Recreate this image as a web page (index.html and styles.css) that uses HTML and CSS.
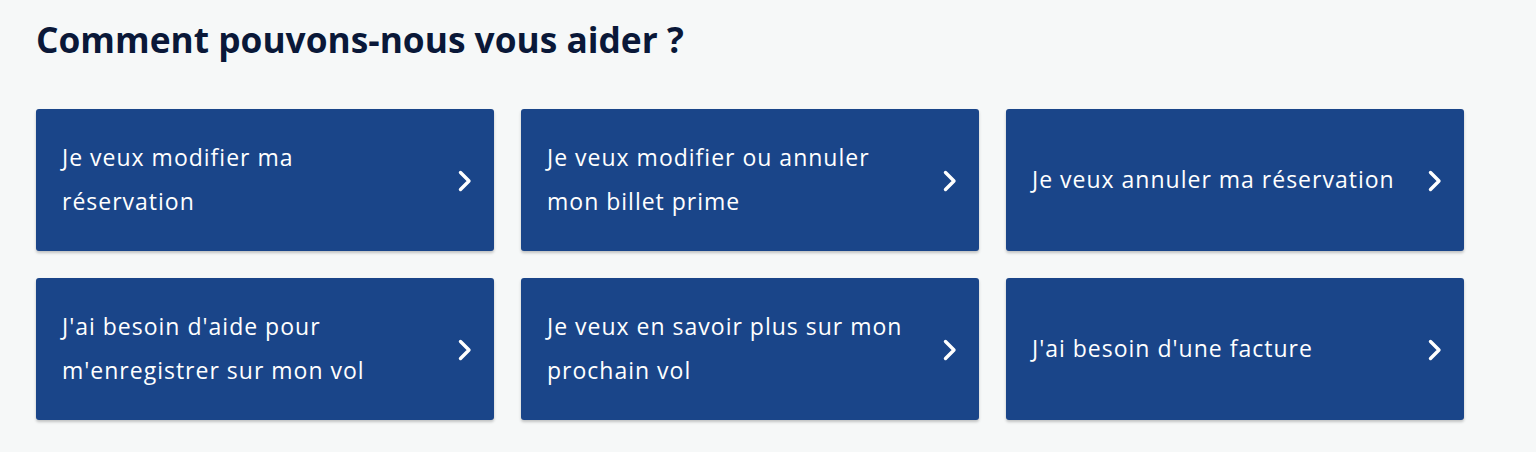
FILE: index.html
```html
<!DOCTYPE html>
<html lang="fr">
<head>
    <meta charset="UTF-8">
    <meta name="viewport" content="width=device-width, initial-scale=1.0">
    <title>Aide</title>
    <link rel="stylesheet" href="styles.css">
</head>
<body>
    <section class="help">
        <h1 class="help-title">Comment pouvons-nous vous aider ?</h1>
        <div class="help-grid">
            <a class="help-card" href="#">
                <span class="help-label">Je veux modifier ma<br>réservation</span>
                <svg class="chevron" viewBox="0 0 15 22"><path d="M3.5 2.5l8.5 8.5-8.5 8.5"/></svg>
            </a>
            <a class="help-card" href="#">
                <span class="help-label">Je veux modifier ou annuler<br>mon billet prime</span>
                <svg class="chevron" viewBox="0 0 15 22"><path d="M3.5 2.5l8.5 8.5-8.5 8.5"/></svg>
            </a>
            <a class="help-card" href="#">
                <span class="help-label">Je veux annuler ma réservation</span>
                <svg class="chevron" viewBox="0 0 15 22"><path d="M3.5 2.5l8.5 8.5-8.5 8.5"/></svg>
            </a>
            <a class="help-card" href="#">
                <span class="help-label">J'ai besoin d'aide pour<br>m'enregistrer sur mon vol</span>
                <svg class="chevron" viewBox="0 0 15 22"><path d="M3.5 2.5l8.5 8.5-8.5 8.5"/></svg>
            </a>
            <a class="help-card" href="#">
                <span class="help-label">Je veux en savoir plus sur mon<br>prochain vol</span>
                <svg class="chevron" viewBox="0 0 15 22"><path d="M3.5 2.5l8.5 8.5-8.5 8.5"/></svg>
            </a>
            <a class="help-card" href="#">
                <span class="help-label">J'ai besoin d'une facture</span>
                <svg class="chevron" viewBox="0 0 15 22"><path d="M3.5 2.5l8.5 8.5-8.5 8.5"/></svg>
            </a>
        </div>
    </section>
</body>
</html>
```

FILE: styles.css
```css
body {
    margin: 0;
    background-color: #f6f8f8;
    font-family: "Open Sans", Lato, sans-serif;
}
.help {
    padding: 19px 36px 22px;
}
.help-title {
    margin: 0 0 50px;
    font-size: 35.3px;
    line-height: 40px;
    font-weight: 700;
    color: #0a1838;
}
.help-grid {
    display: grid;
    grid-template-columns: repeat(3, 458px);
    grid-auto-rows: 142px;
    gap: 27px;
}
.help-card {
    display: flex;
    align-items: center;
    justify-content: space-between;
    padding: 0 22px 0 26px;
    background-color: #1a4589;
    border-radius: 3px;
    box-shadow: 0 2px 3px rgba(0, 0, 0, 0.22);
    color: white;
    text-decoration: none;
}
.help-label {
    font-size: 23px;
    line-height: 44px;
    letter-spacing: 1px;
    margin-top: -2px;
}
.chevron {
    width: 15px;
    height: 22px;
    flex-shrink: 0;
    margin-top: 1px;
}
.chevron path {
    fill: none;
    stroke: white;
    stroke-width: 3.4;
    stroke-linecap: round;
    stroke-linejoin: round;
}
```
